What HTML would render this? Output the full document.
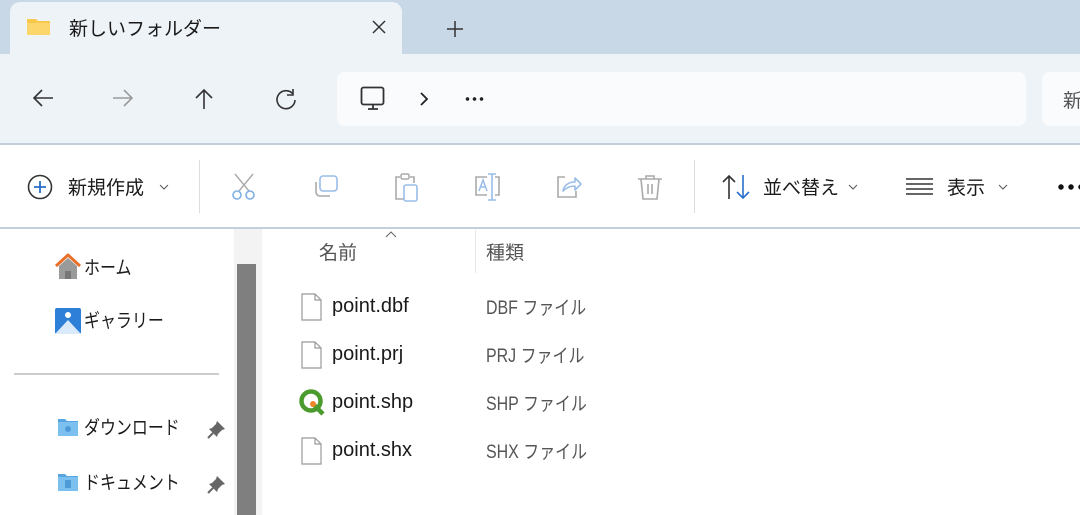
<!DOCTYPE html>
<html><head><meta charset="utf-8"><style>
*{margin:0;padding:0;box-sizing:border-box}
body{width:1080px;height:515px;overflow:hidden;background:#fff;font-family:"Liberation Sans","Noto Sans CJK JP",sans-serif;color:#1a1a1a;position:relative}
.a{position:absolute}
.t{font-size:19px;white-space:nowrap}
.n{transform:scaleX(.84);transform-origin:0 0}
svg{position:absolute;overflow:visible}
</style></head><body>
<div class="a" style="left:0;top:0;width:1080px;height:54px;background:#c8d8e6"></div>
<div class="a" style="left:10px;top:2px;width:392px;height:56px;background:#eef3f8;border-radius:10px 10px 0 0"></div>
<div class="a" style="left:0;top:54px;width:1080px;height:91px;background:#eef3f8;border-bottom:2px solid #c3d0dc"></div>
<svg style="left:26px;top:17px" width="26" height="20"><path d="M1 2h9l2 2h12v14H1z" fill="#f7c94a"/><path d="M1 6h23v12H1z" fill="#fcd66b"/></svg>
<div class="a t" style="left:69px;top:14px">新しいフォルダー</div>
<svg style="left:372px;top:20px" width="14" height="14"><path d="M1 1L13 13M13 1L1 13" stroke="#333" stroke-width="1.5"/></svg>
<svg style="left:446px;top:20px" width="18" height="18"><path d="M9 1v16M1 9h16" stroke="#333" stroke-width="1.5"/></svg>
<svg style="left:32px;top:88px" width="22" height="20"><path d="M21 10H2M10 2L2 10L10 18" stroke="#333" stroke-width="1.6" fill="none"/></svg>
<svg style="left:112px;top:88px" width="22" height="20"><path d="M1 10H20M12 2L20 10L12 18" stroke="#999" stroke-width="1.6" fill="none"/></svg>
<svg style="left:194px;top:88px" width="20" height="22"><path d="M10 21V2M2 10L10 2L18 10" stroke="#333" stroke-width="1.6" fill="none"/></svg>
<svg style="left:275px;top:88px" width="22" height="22"><path d="M18 6A9 9 0 1 0 20 12" stroke="#333" stroke-width="1.6" fill="none"/><path d="M18 1v6h-6" stroke="#333" stroke-width="1.6" fill="none"/></svg>
<div class="a" style="left:337px;top:72px;width:689px;height:54px;background:#f9fbfd;border-radius:8px"></div>
<div class="a" style="left:1042px;top:72px;width:60px;height:54px;background:#f9fbfd;border-radius:8px"></div>
<div class="a t" style="left:1063px;top:86px;color:#555">新</div>
<svg style="left:360px;top:86px" width="26" height="26"><rect x="1.5" y="1.5" width="22" height="17" rx="2" stroke="#333" stroke-width="1.8" fill="none"/><path d="M8 23h10M13 19v4" stroke="#333" stroke-width="1.8"/></svg>
<svg style="left:419px;top:92px" width="10" height="14"><path d="M2 1l6 6-6 6" stroke="#222" stroke-width="1.8" fill="none"/></svg>
<div class="a" style="left:464px;top:97px;width:20px;height:4px;background:radial-gradient(circle,#222 1.6px,transparent 2px) 0 0/7px 4px"></div>
<div class="a" style="left:0;top:227px;width:1080px;height:2px;background:#c3d0dc"></div>
<svg style="left:27px;top:174px" width="26" height="26"><circle cx="13" cy="13" r="11.5" stroke="#333" stroke-width="1.6" fill="none"/><path d="M13 7v12M7 13h12" stroke="#2a6fc9" stroke-width="1.8"/></svg>
<div class="a t" style="left:68px;top:173px">新規作成</div>
<svg style="left:159px;top:184px" width="10" height="6"><path d="M1 1l4 4 4-4" stroke="#555" fill="none"/></svg>
<div class="a" style="left:199px;top:160px;width:1px;height:53px;background:#ddd"></div>
<svg style="left:231px;top:173px" width="26" height="28"><path d="M4 1l14 17M22 1L8 18" stroke="#aaa" stroke-width="1.4"/><circle cx="6" cy="22" r="4" stroke="#7fb0e6" stroke-width="1.6" fill="none"/><circle cx="19" cy="22" r="4" stroke="#7fb0e6" stroke-width="1.6" fill="none"/></svg>
<svg style="left:313px;top:175px" width="26" height="26"><rect x="7" y="1" width="17" height="15" rx="3" stroke="#99bde8" stroke-width="1.6" fill="none"/><path d="M3 7v10a4 4 0 0 0 4 4h10" stroke="#aaa" stroke-width="1.6" fill="none"/></svg>
<svg style="left:393px;top:173px" width="28" height="30"><path d="M7 4H3v22h8" stroke="#aaa" stroke-width="1.6" fill="none"/><path d="M17 4h4v6" stroke="#aaa" stroke-width="1.6" fill="none"/><rect x="8" y="1" width="8" height="5" rx="1.5" stroke="#aaa" stroke-width="1.5" fill="none"/><rect x="11" y="12" width="13" height="16" rx="2" stroke="#99bde8" stroke-width="1.6" fill="none"/></svg>
<svg style="left:473px;top:173px" width="30" height="28"><path d="M14 4H3v18h11M22 4h4v18h-4" stroke="#aaa" stroke-width="1.6" fill="none"/><path d="M15 1h8M19 1v26M15 27h8" stroke="#99bde8" stroke-width="1.6"/><path d="M6 18l4-11 4 11M7.5 14h5" stroke="#99bde8" stroke-width="1.5" fill="none"/></svg>
<svg style="left:555px;top:173px" width="28" height="28"><path d="M10 4H3v20h18v-6" stroke="#aaa" stroke-width="1.6" fill="none"/><path d="M8 18c1-6 6-9 12-9V5l6 6-6 6v-4c-5 0-9 2-12 5z" stroke="#99bde8" stroke-width="1.6" fill="none" stroke-linejoin="round"/></svg>
<svg style="left:637px;top:173px" width="26" height="28"><path d="M1 6h24M9 6V3h8v3M4 6l2 20h14l2-20M11 11v10M15 11v10" stroke="#aaa" stroke-width="1.6" fill="none"/></svg>
<div class="a" style="left:694px;top:160px;width:1px;height:53px;background:#ddd"></div>
<svg style="left:722px;top:174px" width="30" height="26"><path d="M7 25V2M1 8l6-6 6 6" stroke="#333" stroke-width="1.6" fill="none"/><path d="M21 1v23M15 18l6 6 6-6" stroke="#2a6fc9" stroke-width="1.6" fill="none"/></svg>
<div class="a t" style="left:763px;top:173px">並べ替え</div>
<svg style="left:848px;top:184px" width="10" height="6"><path d="M1 1l4 4 4-4" stroke="#555" fill="none"/></svg>
<svg style="left:906px;top:178px" width="28" height="18"><path d="M0 1h27M0 6h27M0 11h27M0 16h27" stroke="#333" stroke-width="1.4"/></svg>
<div class="a t" style="left:947px;top:173px">表示</div>
<svg style="left:998px;top:184px" width="10" height="6"><path d="M1 1l4 4 4-4" stroke="#555" fill="none"/></svg>
<div class="a" style="left:1056px;top:184px;width:24px;height:6px;background:radial-gradient(circle,#111 2.4px,transparent 3px) 0 0/10px 6px"></div>
<div class="a" style="left:234px;top:229px;width:28px;height:286px;background:#f3f3f3"></div>
<div class="a" style="left:237px;top:264px;width:19px;height:251px;background:#7f7f7f"></div>
<svg style="left:54px;top:253px" width="28" height="28"><path d="M2 13L14 2l12 11" stroke="#e8702a" stroke-width="3" fill="none" stroke-linejoin="round"/><path d="M5 13v13h18V13L14 5z" fill="#9a9a9a"/><path d="M11 26v-8h6v8" fill="#777"/></svg>
<div class="a t n" style="left:84px;top:253px">ホーム</div>
<svg style="left:54px;top:307px" width="28" height="28"><rect x="1" y="1" width="26" height="26" rx="2" fill="#2d7fd8"/><path d="M1 27L14 13l13 14z" fill="#dbeafb"/><circle cx="14" cy="8" r="3" fill="#fff"/></svg>
<div class="a t n" style="left:84px;top:306px">ギャラリー</div>
<div class="a" style="left:14px;top:373px;width:205px;height:2px;background:#ccc"></div>
<svg style="left:57px;top:417px" width="22" height="20"><path d="M1 2h7l2 2h11v15H1z" fill="#56a6e4"/><path d="M1 5h20v14H1z" fill="#7cc0f0"/><circle cx="11" cy="12" r="3" fill="#4f9bd8"/></svg>
<div class="a t n" style="left:84px;top:413px">ダウンロード</div>
<svg style="left:57px;top:472px" width="22" height="20"><path d="M1 2h7l2 2h11v15H1z" fill="#56a6e4"/><path d="M1 5h20v14H1z" fill="#7cc0f0"/><rect x="8" y="8" width="6" height="8" fill="#4f9bd8"/></svg>
<div class="a t n" style="left:84px;top:468px">ドキュメント</div>
<svg style="left:207px;top:419px" width="20" height="20"><path d="M10 2l8 8-3 1-4 4-1 3-8-8 3-1 4-4z" fill="#666"/><path d="M6 14l-5 5" stroke="#666" stroke-width="2"/></svg>
<svg style="left:207px;top:474px" width="20" height="20"><path d="M10 2l8 8-3 1-4 4-1 3-8-8 3-1 4-4z" fill="#666"/><path d="M6 14l-5 5" stroke="#666" stroke-width="2"/></svg>
<svg style="left:385px;top:231px" width="12" height="7"><path d="M1 6l5-5 5 5" stroke="#666" fill="none"/></svg>
<div class="a t" style="left:319px;top:238px;color:#555">名前</div>
<div class="a" style="left:475px;top:230px;width:1px;height:43px;background:#e6e6e6"></div>
<div class="a t" style="left:486px;top:238px;color:#555">種類</div>
<svg style="left:301px;top:293px" width="22" height="28"><path d="M1 1h13l6 6v20H1z" fill="#fff" stroke="#999" stroke-width="1.2"/><path d="M14 1v6h6" stroke="#999" stroke-width="1.2" fill="none"/></svg>
<div class="a t" style="left:332px;top:295px;font-size:20px">point.dbf</div>
<div class="a t n" style="left:486px;top:293px;color:#555">DBF ファイル</div>
<svg style="left:301px;top:341px" width="22" height="28"><path d="M1 1h13l6 6v20H1z" fill="#fff" stroke="#999" stroke-width="1.2"/><path d="M14 1v6h6" stroke="#999" stroke-width="1.2" fill="none"/></svg>
<div class="a t" style="left:332px;top:343px;font-size:20px">point.prj</div>
<div class="a t n" style="left:486px;top:341px;color:#555">PRJ ファイル</div>
<svg style="left:298px;top:389px" width="28" height="28"><circle cx="13" cy="12" r="9.5" stroke="#4b9a2d" stroke-width="4.5" fill="none"/><path d="M14 14l11 11" stroke="#4b9a2d" stroke-width="4.5"/><circle cx="15" cy="15" r="3" fill="#f0862a"/></svg>
<div class="a t" style="left:332px;top:391px;font-size:20px">point.shp</div>
<div class="a t n" style="left:486px;top:389px;color:#555">SHP ファイル</div>
<svg style="left:301px;top:437px" width="22" height="28"><path d="M1 1h13l6 6v20H1z" fill="#fff" stroke="#999" stroke-width="1.2"/><path d="M14 1v6h6" stroke="#999" stroke-width="1.2" fill="none"/></svg>
<div class="a t" style="left:332px;top:439px;font-size:20px">point.shx</div>
<div class="a t n" style="left:486px;top:437px;color:#555">SHX ファイル</div>
</body></html>
